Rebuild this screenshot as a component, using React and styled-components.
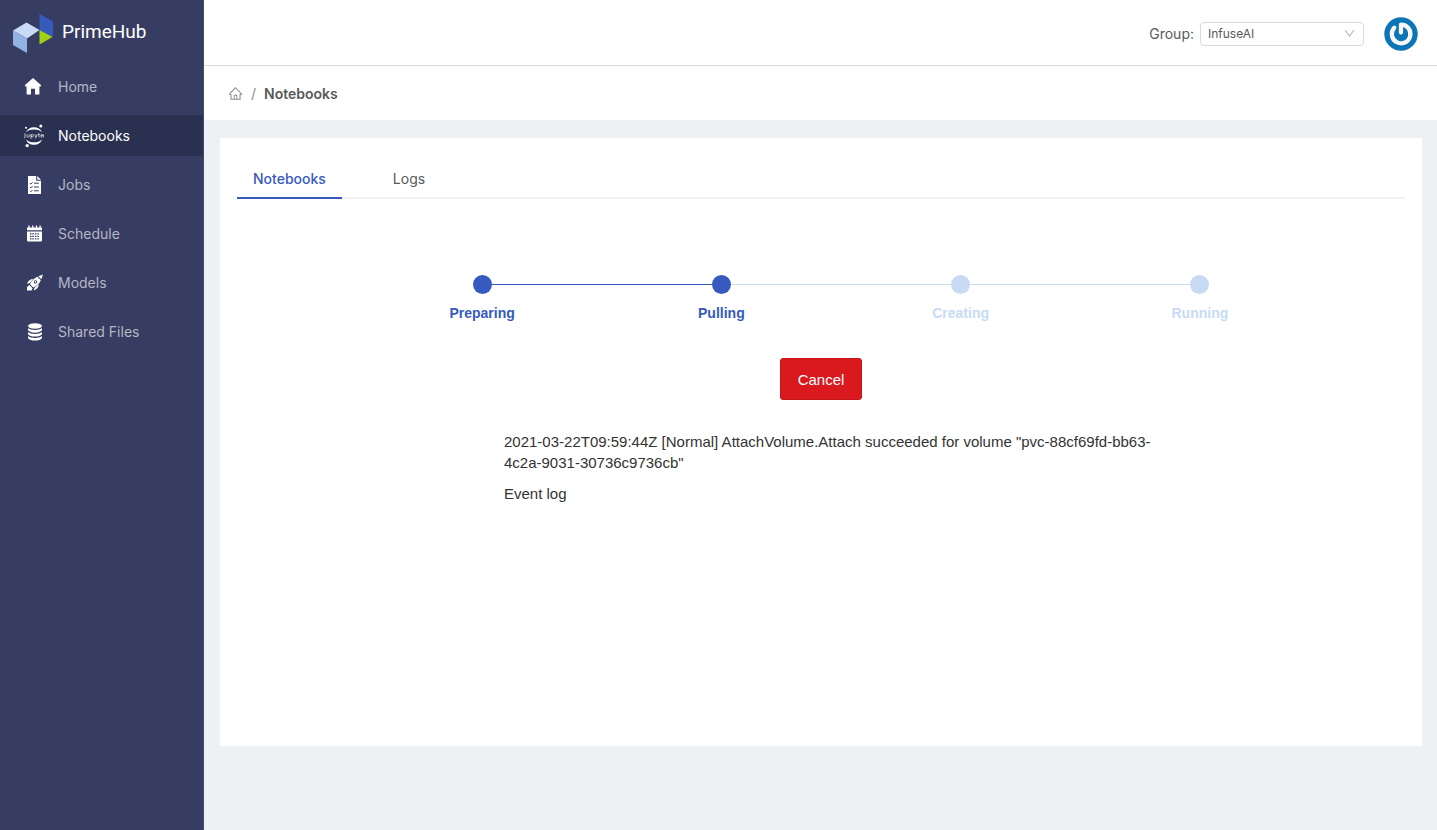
import { useState } from "react";
import styled, { createGlobalStyle } from "styled-components";
import { AiOutlineDown, AiOutlineHome } from "react-icons/ai";

const MENU = [
  { label: "Home", icon: HomeIcon },
  { label: "Notebooks", icon: JupyterIcon },
  { label: "Jobs", icon: JobsIcon },
  { label: "Schedule", icon: ScheduleIcon },
  { label: "Models", icon: RocketIcon },
  { label: "Shared Files", icon: FilesIcon },
];

const STEPS = ["Preparing", "Pulling", "Creating", "Running"];
const CURRENT_STEP = 1;

export default function App() {
  const [tab, setTab] = useState("Notebooks");

  return (
    <Layout>
      <GlobalStyle />
      <Sidebar>
        <Brand href="#">
          <LogoIcon />
          <BrandName>PrimeHub</BrandName>
        </Brand>
        <Menu>
          {MENU.map(({ label, icon: Icon }) => (
            <MenuLink key={label} href="#" $active={label === "Notebooks"}>
              <Icon />
              {label}
            </MenuLink>
          ))}
        </Menu>
      </Sidebar>

      <Main>
        <Header>
          <GroupLabel htmlFor="group">Group:</GroupLabel>
          <SelectBox>
            <Select id="group" defaultValue="InfuseAI">
              <option>InfuseAI</option>
            </Select>
            <AiOutlineDown />
          </SelectBox>
          <AvatarButton aria-label="Account">
            <AvatarIcon />
          </AvatarButton>
        </Header>

        <Breadcrumb>
          <HomeLink href="#" aria-label="Home">
            <AiOutlineHome />
          </HomeLink>
          <span>/</span>
          <Current>Notebooks</Current>
        </Breadcrumb>

        <Panel>
          <Tabs role="tablist">
            {["Notebooks", "Logs"].map((name) => (
              <Tab
                key={name}
                role="tab"
                aria-selected={tab === name}
                $active={tab === name}
                onClick={() => setTab(name)}
              >
                {name}
              </Tab>
            ))}
          </Tabs>

          <Steps>
            {STEPS.map((step, i) => (
              <Step key={step} $done={i <= CURRENT_STEP}>
                <Track>
                  <Line $done={i <= CURRENT_STEP} $hidden={i === 0} />
                  <Dot $done={i <= CURRENT_STEP} />
                  <Line $done={i < CURRENT_STEP} $hidden={i === STEPS.length - 1} />
                </Track>
                {step}
              </Step>
            ))}
          </Steps>

          <CancelButton>Cancel</CancelButton>

          <EventLog>
            <p>
              2021-03-22T09:59:44Z [Normal] AttachVolume.Attach succeeded for volume
              "pvc-88cf69fd-bb63-4c2a-9031-30736c9736cb"
            </p>
            <p>Event log</p>
          </EventLog>
        </Panel>
      </Main>
    </Layout>
  );
}

/* ------------------- icons ------------------- */
function LogoIcon() {
  return (
    <svg width="40" height="40" viewBox="0 0 40 40">
      <path d="M0 16.5 13.5 8.5 26.5 16 14 24.5Z" fill="#c7dbf5" />
      <path d="M0 16.5 14 24.5V39L0 31Z" fill="#92b2e4" />
      <path d="M26.500 0 40 7.500V23.500L26.500 16Z" fill="#365abd" />
      <path d="M26.500 16 39.500 23 26.500 30.500Z" fill="#a2d20f" />
    </svg>
  );
}

function HomeIcon() {
  return (
    <svg width="20" height="20" viewBox="0 0 20 20" fill="#fff">
      <path d="M9 1 17.200 8.300 16.600 9.500H15.400V17.500H11V11.700H7V17.500H2.600V9.500H1.400L.8 8.300Z" />
    </svg>
  );
}

function JupyterIcon() {
  return (
    <svg width="20" height="24" viewBox="0 0 20 24" fill="#fff">
      <path d="M2 8.200C3.500 4.600 6.500 3.200 10 3.200S16.500 4.600 18 8.200C16 6.300 13 5.600 10 5.600S4 6.300 2 8.200Z" />
      <path d="M2 15.400C3.500 19.200 6.500 20.800 10 20.800S16.500 19.200 18 15.400C16 17.400 13 18.200 10 18.200S4 17.400 2 15.400Z" />
      <circle cx="16.800" cy="2" r="1.500" />
      <circle cx="2" cy="3.800" r="1" />
      <circle cx="3.200" cy="21.600" r="1.700" />
      <g fill="none" stroke="#fff" strokeWidth=".8" opacity=".85">
        <path d="M1 9.300V13q0 1-1 1M3 10.300v1.900q0 1 1.100 1t1.100-1v-1.900M7 14.800v-4.500M7 11.600q0-1.100 1.200-1.100t1.200 1.200-1.200 1.200T7 11.700M10.700 10.300l1.200 2.700M13.200 10.300l-1.500 3.600-.8.600M14.800 9.300v3q0 .8.800.8M14.100 10.400h1.600M16.900 11.800h1.700q0-1.400-.9-1.400t-.9 1.400.9 1.400h.8M19.600 13.300v-3" />
      </g>
    </svg>
  );
}

function JobsIcon() {
  return (
    <svg width="20" height="20" viewBox="0 0 20 20" fill="#fff">
      <path d="M4 1h8.200v4.800H17V19H4Z" />
      <path d="M13.300 1 17 4.700H13.300Z" />
      <path
        d="M6 8.200l.9.900 1.600-1.700M6 12l.9.900 1.600-1.700M6 15.800l.9.900L8.500 15M10 8.200h4.800M10 12h4.800M10 15.800h4.800"
        fill="none"
        stroke="#373d62"
      />
    </svg>
  );
}

function ScheduleIcon() {
  return (
    <svg width="20" height="20" viewBox="0 0 20 20" fill="#fff">
      <path d="M3 3.500H4.300V1.500H5.600V3.500H8.100V1.500H9.400V3.500H11.800V1.500H13.100V3.500H15.400V1.500H16.700V3.500H18V6.300H3Z" />
      <path d="M3 7.500H18V16.500Q18 17.500 17 17.500H4Q3 17.500 3 16.500Z" />
      <path
        d="M6 9.800h1.500M8.300 9.800h1.500M10.900 9.800h1.500M13.400 9.800h1.500M6 12.300h1.500M8.300 12.300h1.500M10.900 12.300h1.500M13.400 12.300h1.500M6 14.800h1.500M8.300 14.800h1.500M10.900 14.800h1.500M13.400 14.800h1.500"
        stroke="#373d62"
        strokeWidth="1.300"
      />
    </svg>
  );
}

function RocketIcon() {
  return (
    <svg width="20" height="20" viewBox="0 0 20 20" fill="#fff">
      <path d="M14.300 3.200 19 1.500 17.300 6.300Z" />
      <path d="M13.400 3.700 16.800 7.200C15.700 10.300 12.800 12.800 9.300 14.600L6 11.300C7.500 7.800 10.100 4.900 13.400 3.700Z" />
      <path d="M9.300 5.700 6 9.900 3 10.800C4.300 7.600 6.300 5.800 9.300 5.700ZM14.800 11.300 10.600 14.700 9.700 17.600C13 16.300 14.700 14.300 14.800 11.300Z" />
      <path d="M5.400 12.100 8.600 15.300 7.500 17.500H3V14Z" />
      <circle cx="11.500" cy="8.900" r="1.700" fill="#373d62" />
      <circle cx="11.500" cy="8.900" r=".8" />
    </svg>
  );
}

function FilesIcon() {
  return (
    <svg width="20" height="20" viewBox="0 0 20 20" fill="#fff">
      <ellipse cx="11" cy="4" rx="7" ry="2.800" />
      <path d="M4 6.200Q6.500 8 11 8T18 6.200V8.300Q16 10.700 11 10.700T4 8.300Z" />
      <path d="M4 10.300Q6.500 12.100 11 12.100T18 10.300V12.300Q16 14.600 11 14.600T4 12.300Z" />
      <path d="M4 14.300Q6.500 16.100 11 16.100T18 14.300V16Q16 18.600 11 18.600T4 16Z" />
    </svg>
  );
}

function AvatarIcon() {
  return (
    <svg width="34" height="34" viewBox="0 0 34 34">
      <circle cx="17" cy="17" r="16.700" fill="#0a75b8" />
      <g fill="none" strokeLinecap="round" strokeLinejoin="round" strokeWidth="4.300">
        <path d="M10.300 10.700A9.300 9.300 0 1 0 17 7.700V15.500" stroke="#065c94" opacity=".5" transform="translate(.6 .8)" />
        <path d="M10.300 10.700A9.300 9.300 0 1 0 17 7.700V15.500" stroke="#f7f7f7" />
      </g>
    </svg>
  );
}

/* ------------------- styled-components ------------------- */
const GlobalStyle = createGlobalStyle`
  * {
    box-sizing: border-box;
  }
  body {
    margin: 0;
    background: #edf1f4;
    color: #595959;
    font-family: Inter, "Liberation Sans", sans-serif;
    font-size: 14px;
  }
  a {
    color: inherit;
    text-decoration: none;
  }
  button, select {
    font: inherit;
    cursor: pointer;
  }
`;

const Layout = styled.div`
  display: flex;
  min-height: 100vh;
`;

const Sidebar = styled.aside`
  flex: 0 0 204px;
  background: #373d62;
  border-right: 1px solid #454a70;
`;

const Brand = styled.a`
  display: flex;
  align-items: center;
  gap: 9px;
  height: 66px;
  padding: 2px 0 0 13px;
  color: #fff;
`;

const BrandName = styled.span`
  padding-bottom: 6px;
  font-family: Roboto, sans-serif;
  font-size: 19px;
`;

const Menu = styled.nav`
  display: flex;
  flex-direction: column;
  gap: 8px;
`;

const MenuLink = styled.a`
  display: flex;
  align-items: center;
  gap: 14px;
  height: 41px;
  padding-left: 24px;
  background: ${({ $active }) => ($active ? "#2a3050" : "transparent")};
  color: ${({ $active }) => ($active ? "#fff" : "#b4b6c4")};
`;

const Main = styled.main`
  flex: 1;
  min-width: 0;
`;

const Header = styled.header`
  display: flex;
  align-items: center;
  justify-content: flex-end;
  height: 66px;
  padding: 2px 19px 0 0;
  background: #fff;
  border-bottom: 1px solid #d9d9d9;
`;

const GroupLabel = styled.label`
  margin-right: 6px;
`;

const SelectBox = styled.div`
  display: grid;
  align-items: center;
  width: 164px;
  margin-right: 20px;

  > * {
    grid-area: 1 / 1;
  }
  svg {
    justify-self: end;
    margin-right: 8px;
    color: #b5b5b5;
    font-size: 13px;
    pointer-events: none;
  }
`;

const Select = styled.select`
  width: 100%;
  height: 24px;
  padding: 0 7px;
  appearance: none;
  background: #fff;
  border: 1px solid #d9d9d9;
  border-radius: 4px;
  color: #595959;
  font-size: 12px;
`;

const AvatarButton = styled.button`
  display: flex;
  padding: 0;
  background: none;
  border: 0;
`;

const Breadcrumb = styled.nav`
  display: flex;
  align-items: center;
  gap: 8px;
  height: 54px;
  padding-left: 24px;
  background: #fff;
  color: #8c8c8c;
`;

const HomeLink = styled.a`
  display: flex;
  font-size: 15px;
`;

const Current = styled.span`
  color: #595959;
  font-weight: 600;
`;

const Panel = styled.section`
  display: flex;
  flex-direction: column;
  align-items: center;
  min-height: 608px;
  margin: 18px 15px 0 16px;
  padding: 17px;
  background: #fff;
`;

const Tabs = styled.div`
  display: flex;
  align-self: stretch;
  gap: 35px;
  box-shadow: inset 0 -2px #f3f3f3;
`;

const Tab = styled.button`
  height: 44px;
  padding: 4px 16px 0;
  background: none;
  border: 0;
  border-bottom: 2px solid ${({ $active }) => ($active ? "#365abd" : "transparent")};
  color: ${({ $active }) => ($active ? "#365abd" : "#595959")};
  font-weight: ${({ $active }) => ($active ? 500 : 400)};
`;

const Steps = styled.ol`
  display: flex;
  width: 100%;
  max-width: 997px;
  margin: 75px 0 35px;
  padding: 0 0 0 40px;
  list-style: none;
`;

const Step = styled.li`
  flex: 1;
  color: ${({ $done }) => ($done ? "#365abd" : "#c7dbf5")};
  font-family: "Liberation Sans", sans-serif;
  font-weight: 700;
  line-height: 20px;
  text-align: center;
`;

const Track = styled.div`
  display: flex;
  align-items: center;
  height: 20px;
  margin-bottom: 9px;
`;

const Line = styled.span`
  flex: 1;
  height: 1px;
  background: ${({ $done }) => ($done ? "#365abd" : "#c9dcec")};
  visibility: ${({ $hidden }) => ($hidden ? "hidden" : "visible")};
`;

const Dot = styled.span`
  width: 19px;
  height: 19px;
  border-radius: 50%;
  background: ${({ $done }) => ($done ? "#365abd" : "#c7dbf5")};
`;

const CancelButton = styled.button`
  width: 82px;
  height: 42px;
  background: #d9191e;
  border: 1px solid #c5161b;
  border-radius: 3px;
  color: #fff;
  font-family: "Liberation Sans", sans-serif;
  font-size: 15px;
`;

const EventLog = styled.div`
  width: 100%;
  max-width: 650px;
  margin: 31px 0 0 16px;
  color: #333;
  font-family: "Liberation Sans", sans-serif;
  font-size: 15px;
  line-height: 21px;

  p {
    margin: 0 0 10px;
  }
`;
